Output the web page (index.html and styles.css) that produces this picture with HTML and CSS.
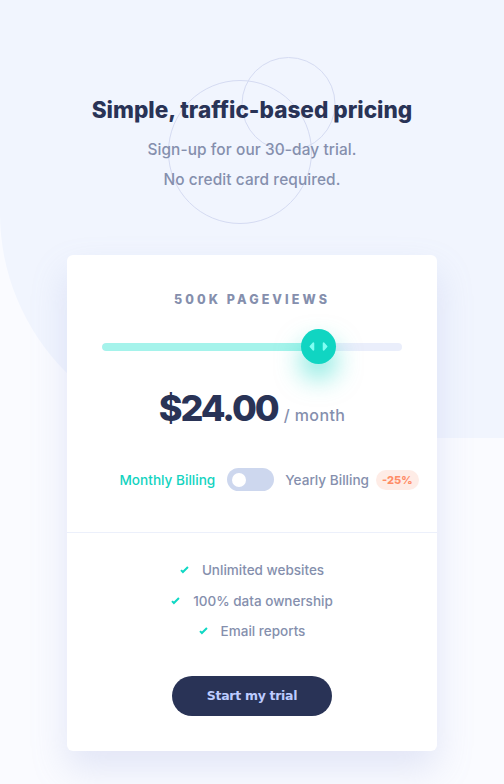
FILE: index.html
```html
<!DOCTYPE html>
<html lang="en">
<head>
<meta charset="utf-8">
<title>Interactive pricing component</title>
<link rel="stylesheet" href="styles.css">
</head>
<body>
<main class="page">
  <header class="hero">
    <svg class="hero-circles" width="200" height="200" viewBox="0 0 200 200" aria-hidden="true">
      <circle cx="72" cy="100" r="71.5" fill="none" stroke="#d5dbf2" stroke-width="1"/>
      <circle cx="120.5" cy="52" r="46.5" fill="none" stroke="#d5dbf2" stroke-width="1"/>
    </svg>
    <h1 class="hero-title">Simple, traffic-based pricing</h1>
    <p class="hero-sub">Sign-up for our 30-day trial.<br>No credit card required.</p>
  </header>

  <section class="card">
    <div class="card-top">
      <p class="views">500K Pageviews</p>
      <div class="slider">
        <div class="track"><div class="fill" style="width:72%"></div></div>
        <div class="thumb" style="left:72%">
          <svg width="22" height="13" viewBox="0 0 22 13"><path fill="#80fff3" d="M16 2.558v7.884a1 1 0 001.735.679l3.639-3.943a1 1 0 000-1.356l-3.64-3.943A1 1 0 0016 2.558zM6 2.558v7.884a1 1 0 01-1.735.679L.626 7.178a1 1 0 010-1.356l3.64-3.943A1 1 0 016 2.558z"/></svg>
        </div>
      </div>
      <div class="price"><span class="amount">$24.00</span><span class="per">/ month</span></div>
      <div class="billing">
        <span class="bill-label active">Monthly Billing</span>
        <span class="toggle"><span class="knob"></span></span>
        <span class="bill-label">Yearly Billing</span>
        <span class="badge">-25%</span>
      </div>
    </div>
    <div class="card-bottom">
      <ul class="features">
        <li><svg width="9" height="8" viewBox="0 0 9 8"><path fill="none" stroke="#10d8c4" stroke-width="2" d="M1 4.134l1.907 1.908L7.949 1"/></svg>Unlimited websites</li>
        <li><svg width="9" height="8" viewBox="0 0 9 8"><path fill="none" stroke="#10d8c4" stroke-width="2" d="M1 4.134l1.907 1.908L7.949 1"/></svg>100% data ownership</li>
        <li><svg width="9" height="8" viewBox="0 0 9 8"><path fill="none" stroke="#10d8c4" stroke-width="2" d="M1 4.134l1.907 1.908L7.949 1"/></svg>Email reports</li>
      </ul>
      <button class="cta">Start my trial</button>
    </div>
  </section>
</main>
</body>
</html>
```

FILE: styles.css
```css
* { box-sizing: border-box; }
html, body { margin: 0; padding: 0; }
body {
  background: #fafbff;
  font-family: "Inter", "Open Sans", sans-serif;
  color: #858fad;
  min-height: 784px;
}
.page {
  position: relative;
  display: flex;
  flex-direction: column;
  align-items: center;
  padding-bottom: 34px;
}
.page::before {
  content: "";
  position: absolute;
  left: 0; top: 0; right: 0;
  height: 438px;
  background: #f1f5fe;
  border-bottom-left-radius: 225px;
  z-index: 0;
}
.hero {
  position: relative;
  z-index: 1;
  width: 100%;
  display: flex;
  flex-direction: column;
  align-items: center;
  padding-top: 96px;
}
.hero-circles {
  position: absolute;
  left: 168px;
  top: 52px;
}
.hero-title {
  position: relative;
  margin: 0;
  font-size: 22.6px;
  line-height: 28px;
  font-weight: 800;
  color: #293356;
  letter-spacing: 0;
}
.hero-sub {
  position: relative;
  margin: 11px 0 0;
  font-size: 15.4px;
  line-height: 30px;
  font-weight: 500;
  text-align: center;
  letter-spacing: 0.1px;
}
.card {
  position: relative;
  z-index: 1;
  margin-top: 60px;
  width: 370px;
  background: #fff;
  border-radius: 6px;
  box-shadow: 0 18px 36px rgba(140, 155, 215, 0.22);
}
.card-top {
  display: flex;
  flex-direction: column;
  align-items: center;
  padding: 37px 35px 41px;
  border-bottom: 1px solid #ecf0fb;
}
.views {
  margin: 0;
  font-size: 12.5px;
  line-height: 16px;
  font-weight: 800;
  letter-spacing: 3.1px;
  text-transform: uppercase;
}
.slider {
  position: relative;
  width: 300px;
  height: 36px;
  margin-top: 21px;
  display: flex;
  align-items: center;
}
.track {
  width: 100%;
  height: 8px;
  border-radius: 4px;
  background: #eaeefb;
  overflow: hidden;
}
.fill {
  height: 100%;
  background: #a5f3eb;
  border-radius: 4px 0 0 4px;
}
.thumb {
  position: absolute;
  top: 0;
  width: 35px;
  height: 35px;
  margin-left: -17.5px;
  border-radius: 50%;
  background: #10d5c2;
  box-shadow: 0 14px 26px rgba(16, 213, 194, 0.55);
  display: flex;
  align-items: center;
  justify-content: center;
}
.thumb svg { width: 19px; height: 11px; }
.price {
  margin-top: 22px;
  display: flex;
  align-items: baseline;
  gap: 6px;
}
.amount {
  font-size: 36px;
  line-height: 42px;
  font-weight: 800;
  color: #293356;
  letter-spacing: -2px;
}
.per {
  font-size: 16px;
  font-weight: 500;
  letter-spacing: 0.4px;
}
.billing {
  margin-top: 39px;
  display: flex;
  align-items: center;
  padding-left: 34px;
  font-size: 13.6px;
  font-weight: 500;
  white-space: nowrap;
}
.bill-label { white-space: nowrap; }
.bill-label.active { color: #13d3c0; }
.toggle {
  position: relative;
  flex: none;
  width: 47px;
  height: 23px;
  margin: 0 11px 0 12px;
  border-radius: 12px;
  background: #cdd7ee;
  display: flex;
  align-items: center;
  padding-left: 5px;
}
.knob {
  width: 14px;
  height: 14px;
  border-radius: 50%;
  background: #fff;
}
.badge {
  flex: none;
  margin-left: 7px;
  height: 20px;
  padding: 0 6px;
  border-radius: 10px;
  background: #feece6;
  color: #ff8c66;
  font-size: 11px;
  font-weight: 800;
  line-height: 20px;
}
.card-bottom {
  display: flex;
  flex-direction: column;
  align-items: center;
  padding: 22px 0 35px;
}
.features {
  list-style: none;
  margin: 0;
  padding: 0;
  display: flex;
  flex-direction: column;
  align-items: center;
}
.features li {
  display: flex;
  align-items: center;
  gap: 13px;
  font-size: 13.5px;
  line-height: 30.5px;
  font-weight: 500;
}
.cta {
  margin-top: 29px;
  width: 160px;
  height: 40px;
  border: none;
  border-radius: 20px;
  background: #293356;
  color: #bdccff;
  font-family: "DejaVu Sans", Verdana, sans-serif;
  font-weight: 700;
  font-size: 12.5px;
  letter-spacing: -0.3px;
}
```
